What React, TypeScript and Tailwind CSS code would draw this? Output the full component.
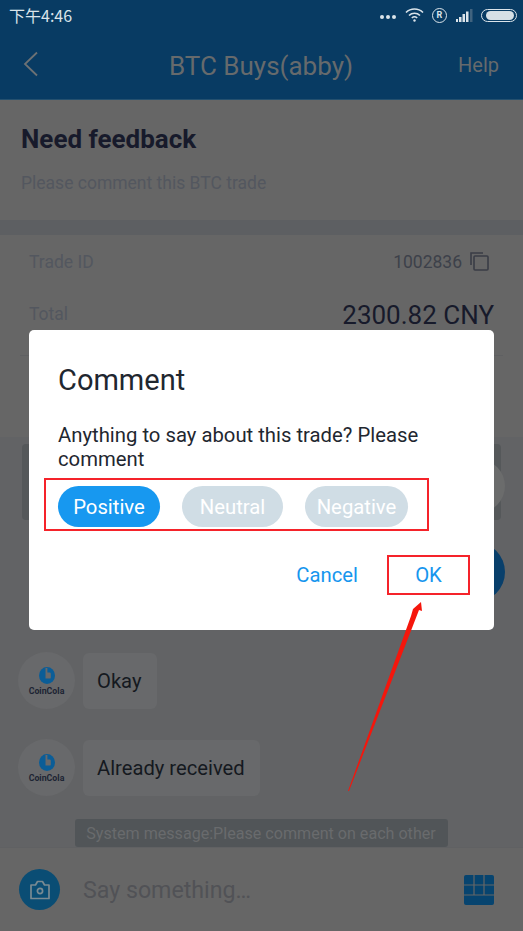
import React from "react";

function Logo() {
  return (
    <div className="w-[57px] h-[57px] rounded-full bg-[#68696b] flex flex-col items-center justify-center shrink-0">
      <svg width="16" height="17" viewBox="0 0 16 17" className="mt-[2px]">
        <ellipse cx="8" cy="8.5" rx="8" ry="8.5" fill="#0b5d97" />
        <path d="M6.5 1 H8.4 V5.5 H10.6 A1.2 1.2 0 0 1 11.8 6.7 V10.4 A1.2 1.2 0 0 1 10.6 11.6 H6.5 Z" fill="#68696b" />
      </svg>
      <span className="text-[#1d2433] text-[8.8px] leading-[12px] font-bold mt-[1px]">CoinCola</span>
    </div>
  );
}

function Message({ text }: { text: string }) {
  return (
    <div className="flex items-center gap-2">
      <Logo />
      <div className="h-[56px] pl-[14px] pr-[15px] pt-[2px] flex items-center bg-[#68696b] rounded-md text-[20.2px] text-[#15191f]">{text}</div>
    </div>
  );
}

export default function App() {
  return (
    <div className="relative w-[523px] h-[931px] overflow-hidden flex flex-col bg-[#666666] font-['Roboto',sans-serif]">
      <header className="h-[100px] bg-[#083b63] shrink-0 flex flex-col border-b border-[#24506f]">
        <div className="h-[30px] flex items-center justify-between pl-[9px] pr-[6px] text-[#dbe4ea]">
          <span className="text-[16px] font-['Noto_Sans_CJK_SC','Roboto',sans-serif]">下午4:46</span>
          <div className="flex items-center">
            <span className="flex gap-[2px] mr-[9px] mt-[4px]">
              <i className="w-[4px] h-[4px] rounded-full bg-[#dbe4ea]" />
              <i className="w-[4px] h-[4px] rounded-full bg-[#dbe4ea]" />
              <i className="w-[4px] h-[4px] rounded-full bg-[#dbe4ea]" />
            </span>
            <svg width="19" height="14" viewBox="0 0 19 14" fill="none" stroke="#dbe4ea" strokeWidth="1.6" className="mr-[8px]">
              <path d="M1 4.5 A12 12 0 0 1 18 4.5" />
              <path d="M4 7.5 A8 8 0 0 1 15 7.5" />
              <path d="M6.8 10 A4 4 0 0 1 12.2 10" />
              <circle cx="9.5" cy="12.5" r="1.2" fill="#dbe4ea" stroke="none" />
            </svg>
            <span className="w-[15px] h-[15px] rounded-full border-[1.5px] border-[#dbe4ea] text-[9px] font-bold leading-none flex items-center justify-center mr-[9px]">R</span>
            <svg width="18" height="13" viewBox="0 0 18 13" fill="#dbe4ea" className="mr-[7px]">
              <rect x="0" y="10" width="2" height="3" />
              <rect x="3" y="8" width="2.5" height="5" />
              <rect x="6.5" y="5" width="2.5" height="8" />
              <rect x="10" y="2.5" width="2.5" height="10.5" />
              <rect x="14" y="0" width="2.5" height="13" fill="#40637f" />
            </svg>
            <span className="w-[36px] h-[13px] rounded-full border border-[#dbe4ea] flex items-center justify-end pr-[2px]">
              <span className="w-[28px] h-[9px] rounded-full bg-[#d5dfe5]" />
            </span>
          </div>
        </div>
        <nav className="flex-1 relative flex items-center justify-between pl-[23px] pr-[9px] pb-[1px]">
          <svg width="16" height="26" viewBox="0 0 16 26" fill="none" stroke="#6d7174" strokeWidth="1.8">
            <path d="M14 1.5 L2 13 L14 24.5" />
          </svg>
          <span className="text-[26px] text-[#666a6c] absolute left-0 right-0 text-center pr-[1px] pt-[4px]">BTC Buys(abby)</span>
          <span className="text-[20px] text-[#666a6c] mr-[15px] pt-[2px]">Help</span>
        </nav>
      </header>

      <section className="h-[120px] shrink-0 px-[21px] pt-[23px]">
        <h1 className="text-[26px] leading-[32px] font-bold text-[#171a2b]">Need feedback</h1>
        <p className="text-[17.5px] leading-[20px] mt-[18px] text-[#53575f]">Please comment this BTC trade</p>
      </section>
      <div className="h-[15px] shrink-0 bg-[#5d5f62]" />

      <section className="h-[202px] shrink-0 px-[20px] flex flex-col">
        <div className="h-[53px] pt-[2px] flex items-center justify-between pl-[9px] pr-[9px]">
          <span className="text-[17.5px] text-[#53575f]">Trade ID</span>
          <div className="flex items-center gap-[8px] text-[17.5px] text-[#3d414a]">
            <span>1002836</span>
            <svg width="19" height="19" viewBox="0 0 19 19" fill="none" stroke="#3a3d46" strokeWidth="1.6" className="mr-[5px] -mt-[2px]">
              <path d="M1 13 V1 H13" />
              <rect x="4" y="4" width="14" height="14" rx="1" />
            </svg>
          </div>
        </div>
        <div className="h-[53px] flex items-center justify-between px-[9px]">
          <span className="text-[17.5px] text-[#53575f]">Total</span>
          <span className="text-[26px] text-[#171a2b] pt-[2px]">2300.82 CNY</span>
        </div>
        <div className="h-px mt-[14px] bg-[#5f6062]" />
      </section>

      <section className="relative flex-1 bg-[#626365] flex flex-col">
        <div className="h-[76px] mt-[7px] mx-[22px] rounded bg-[#55585a] shrink-0" />
        <div className="absolute right-[18px] top-[22px] w-[54px] h-[54px] rounded-full bg-[#6b6c6c]" />
        <div className="absolute right-[18px] top-[105px] w-[60px] h-[60px] rounded-full bg-[#083f6b]" />
        <div className="flex flex-col gap-[30px] px-[18px] mt-[132px]">
          <Message text="Okay" />
          <Message text="Already received" />
        </div>
        <div className="mt-[23px] self-center h-[28px] w-[373px] ml-[-1px] pt-[2px] flex items-center justify-center rounded-[3px] bg-[#515558] text-[16.1px] text-[#696b6d]">
          System message:Please comment on each other
        </div>
      </section>

      <footer className="h-[84px] shrink-0 bg-[#666666] border-t border-[#606163] flex items-center pl-[19px] pr-[29px]">
        <div className="w-[41px] h-[41px] rounded-full bg-[#0a4d74] flex items-center justify-center">
          <svg width="22" height="20" viewBox="0 0 22 20" fill="none" stroke="#7a8a92" strokeWidth="1.7">
            <path d="M2 5 H6.5 L8.5 1.5 H13.5 L15.5 5 H20 V18.5 H2 Z" strokeLinejoin="round" />
            <circle cx="11" cy="11" r="2.6" />
          </svg>
        </div>
        <span className="ml-[23px] pt-[2px] flex-1 text-[23.2px] text-[#515256]">Say something…</span>
        <svg width="30" height="30" viewBox="0 0 30 30" fill="#07446f">
          <rect x="0" y="0" width="30" height="30" rx="2" />
          <path d="M0 10 H30 M0 20 H30 M10 0 V20 M20 0 V20" stroke="#666666" strokeWidth="1.2" />
        </svg>
      </footer>

      {/* dialog */}
      <div className="absolute left-[29px] top-[330px] w-[465px] h-[300px] bg-white rounded-[5px] pl-[29px] flex flex-col">
        <h2 className="text-[29px] leading-[38px] mt-[31px] text-[#1f2730]">Comment</h2>
        <p className="text-[20.3px] leading-[24px] mt-[24px] w-[400px] text-[#1f2730]">Anything to say about this trade? Please comment</p>
        <div className="flex mt-[15px] relative">
          <span className="w-[102px] h-[41px] pt-[1px] rounded-full bg-[#1798f0] text-white text-[20.3px] flex items-center justify-center">Positive</span>
          <span className="ml-[22px] w-[101px] h-[41px] pt-[1px] rounded-full bg-[#d0dde5] text-white text-[20.3px] flex items-center justify-center">Neutral</span>
          <span className="ml-[22px] w-[103px] h-[41px] pt-[1px] rounded-full bg-[#d0dde5] text-white text-[20.3px] flex items-center justify-center">Negative</span>
          <div className="absolute left-[-14px] top-[-8px] w-[385px] h-[53px] border-2 border-[#f5232a]" />
        </div>
        <div className="flex justify-end mt-[28px] pr-[24px]">
          <span className="text-[20.3px] leading-[40px] text-[#1796ee] mr-[29px]">Cancel</span>
          <span className="w-[83px] h-[40px] border-2 border-[#f5232a] flex items-center justify-center text-[20.3px] text-[#1796ee]">OK</span>
        </div>
      </div>

      {/* annotation arrow */}
      <svg className="absolute left-0 top-0 pointer-events-none" width="523" height="931" viewBox="0 0 523 931">
        <polygon points="421,602 422,611 419,610 349,791 348,791 411,616 413,609" fill="#f5160c" />
      </svg>
    </div>
  );
}
